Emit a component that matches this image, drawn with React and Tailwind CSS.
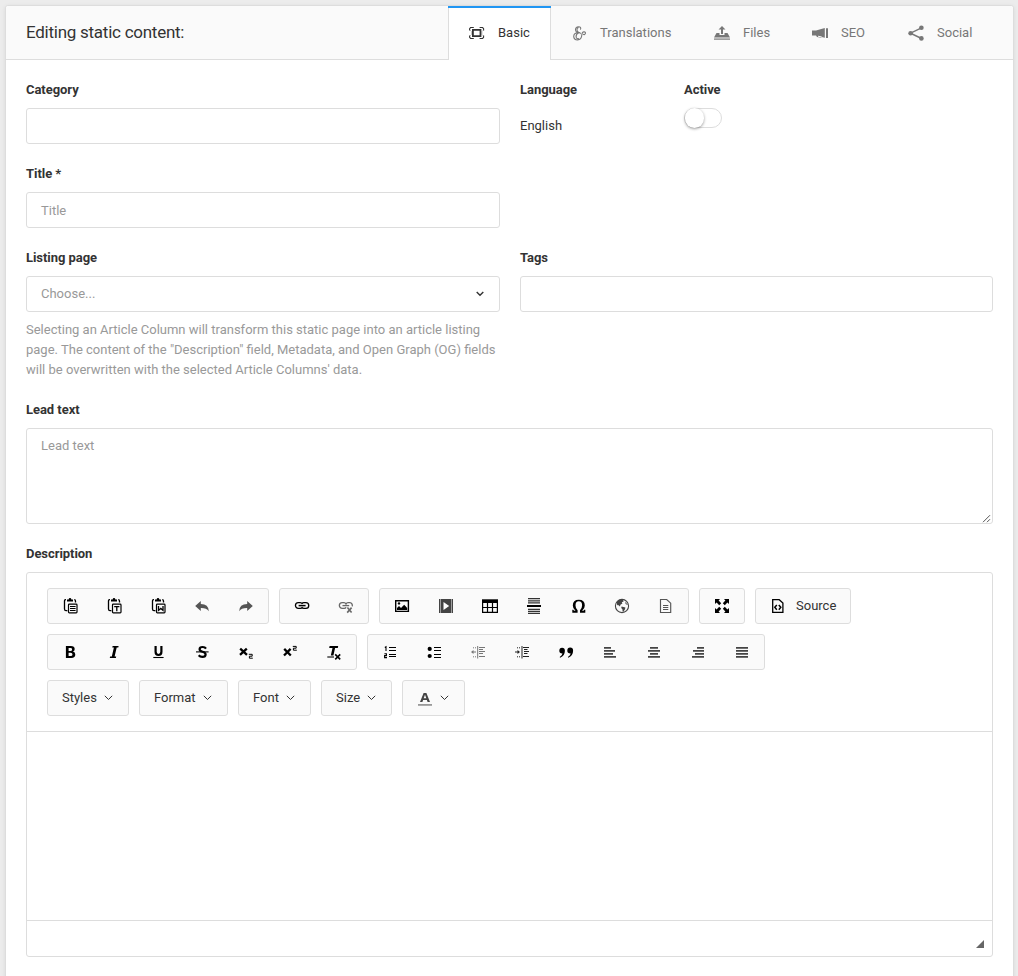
import React from "react";

const Svg = ({ children, className = "" }) => (
  <svg width="16" height="16" viewBox="0 0 16 16" fill="currentColor" className={"block shrink-0 " + className}>
    {children}
  </svg>
);

const line = { fill: "none", stroke: "currentColor" };

const Clip = () => (
  <g>
    <path d="M4 1.6H3.6Q2.5 1.6 2.5 3V11Q2.5 12.6 4 12.6H5.4M12.2 1.6Q13.5 1.6 13.5 3V4.6" {...line} strokeWidth="1.3" />
    <path d="M5 1.4H6.6Q6.8 0 8 0T9.4 1.4H11V3.4H5Z" />
    <rect x="6.5" y="6.1" width="8.5" height="8.8" rx=".8" {...line} strokeWidth="1.2" />
  </g>
);

const icons = {
  paste: <><Clip /><path d="M8 8.5h5.6M8 10.5h5.6M8 12.5h5.6" {...line} /></>,
  pasteText: <><Clip /><path d="M8.2 8.6h5.2M10.8 8.6V13.2" {...line} strokeWidth="1.3" /></>,
  pasteWord: <><Clip /><path d="M8.5 8V12.4L10.8 10.4L13 12.4V8" {...line} strokeWidth="1.3" /></>,
  undo: <path d="M1.2 8 6.8 3V6Q14.6 6 14.8 13.2Q12.4 9.8 6.8 10V13Z" fill="#555" />,
  redo: <path d="M14.8 8 9.2 3V6Q1.4 6 1.2 13.2Q3.6 9.8 9.2 10V13Z" fill="#555" />,
  link: <>
    <path d="M6.4 10.4H4.3A2.85 2.85 0 0 1 4.3 4.7H6.2Q7.7 4.7 8.4 6M9.8 4.7H11.9A2.85 2.85 0 0 1 11.9 10.4H10Q8.5 10.4 7.8 9.1M9.8 4.7Q8.6 4.8 8 5.6M6.4 10.4Q7.6 10.3 8.2 9.5" {...line} strokeWidth="1.3" />
    <path d="M4.6 7.6H11.6" {...line} strokeWidth="1.5" />
  </>,
  unlink: <g className="text-[#686868]">
    <path d="M6.2 10.4H4.2A2.85 2.85 0 0 1 4.2 4.7H6Q7.4 4.7 8 6Q8.6 4.7 10 4.7H11.9Q14.7 5 14.3 8.4M6.2 10.4Q7.6 10.3 8 9.2" {...line} strokeWidth="1.3" />
    <path d="M4.5 7.6H11.2" {...line} strokeWidth="1.3" />
    <path d="M9.4 9.6 13.6 14.6M13.6 9.6 9.2 14.6" {...line} strokeWidth="1.6" />
  </g>,
  image: <><path d="M1.7 2.7h12.7v10.7H1.7z" {...line} strokeWidth="1.4" /><path d="M3 12V10L5 8L7 10L10.2 6.8L13.2 10V12Z" /><circle cx="5" cy="5.4" r="1.2" /></>,
  video: <><path d="M1 1H15V15H1Z" fill="#444" /><path d="M2.5 1.5V15M13.5 1.5V15" fill="none" stroke="#fafafa" strokeDasharray="1 1" /><path d="M5.5 4V12L11.2 8Z" fill="#fff" /></>,
  table: <><path d="M0 1.3H16V5H0Z" /><path d="M.6 4V14.4H15.4V4M.5 9.5H15.5M5.5 5V14.5M10.5 5V14.5" {...line} strokeWidth="1.2" /></>,
  hr: <><path d="M2 .7H14M2 2.8H14M2 4.9H14M2 11.3H14M2 13.4H14M2 15.4H14" {...line} stroke="#333" strokeWidth="1.2" /><path d="M1 7h14v2H1z" /></>,
  omega: <path transform="translate(.8 .3)" d="M1.5 14.4V11.4H2.6Q2.8 12.4 3.8 12.4H4.7Q2 10.6 2 7.2Q2 1.5 8 1.5T14 7.2Q14 10.6 11.3 12.4H12.3Q13.2 12.4 13.4 11.4H14.5V14.4H9.2V11.9Q11.3 10 11.3 7.2Q11.3 3 8 3T4.7 7.2Q4.7 10 6.8 11.9V14.4Z" />,
  globe: <g className="text-[#444]"><circle cx="8" cy="8" r="6.6" {...line} strokeWidth="1.1" /><path d="M3 3.6Q6 1 8.8 1.6L9.6 3.4L7.8 4.2L8.4 5.6L6.4 6.8L6 8.4L3.8 6.8L3 7.6Z" /><path d="M7.6 8.4L11.4 9.4L11 11.2L9.4 13.8L8.6 13.5L8.4 11.2L7.2 10Z" /><path d="M11.6 3.6L14.2 7L12.4 6.8L11 5.2Z" fillOpacity=".65" /></g>,
  doc: <g className="text-[#555]" transform="translate(-.5 0)"><path d="M3 1.5H9.2L13.2 5.2V14.5H3Z" {...line} strokeWidth="1.15" /><path d="M5.5 7.5H10.8M5.5 9.5H10.8M5.5 11.5H10.8" {...line} /></g>,
  maximize: <path d="M1 1H6L4.6 2.6L7.2 5.2L5.2 7.2L2.6 4.6L1 6ZM15 1V6L13.4 4.6L10.8 7.2L8.8 5.2L11.4 2.6L10 1ZM1 15V10L2.6 11.4L5.2 8.8L7.2 10.8L4.6 13.4L6 15ZM15 15H10L11.4 13.4L8.8 10.8L10.8 8.8L13.4 11.4L15 10Z" />,
  source: <><path d="M3.7 1.7H10.2L13.9 5V14.4H3.7Z" {...line} strokeWidth="1.3" /><path d="M7.8 6.9 5.8 9.3 7.8 11.7M9.8 6.9 11.8 9.3 9.8 11.7" {...line} strokeWidth="1.5" /></>,
  bold: <path transform="translate(.5 0)" fillRule="evenodd" d="M3.4 2H8.4Q12.2 2 12.2 5Q12.2 7.1 10.5 7.6Q12.8 8.2 12.8 10.6Q12.8 14 8.8 14H3.4ZM6.1 4V6.9H7.9Q9.6 6.9 9.6 5.4T7.9 4ZM6.1 8.8V12H8.1Q10 12 10 10.4T8.1 8.8Z" />,
  italic: <path d="M6.6 2H12.6L12.3 3.6H10.7L8.6 12.4H10.2L9.9 14H3.8L4.1 12.4H5.8L7.9 3.6H6.3Z" />,
  underline: <><path d="M5.6 2V7.8Q5.6 11 8.5 11T11.4 7.8V2" {...line} strokeWidth="2.2" /><path d="M3.3 13.5H13.6" {...line} strokeWidth="1.1" /></>,
  strike: <g transform="translate(.4 0)"><path d="M11.6 4.6Q10.6 3 8.2 3Q5.2 3 5.2 5.2Q5.2 7 8.2 7.7Q11.2 8.5 11.2 10.5Q11.2 12.9 8 12.9Q5.6 12.9 4.3 11.3" {...line} strokeWidth="2.2" /><path d="M1.6 7.9H14.2" {...line} strokeWidth="1.1" /></g>,
  sub: <><path d="M2.2 4.6 9 10.8M8.8 4.6 2 10.8" {...line} strokeWidth="2.3" /><path d="M10.8 10.3H14.2V12.2H11.4V14.2H14.8" {...line} strokeWidth="1" /></>,
  sup: <><path d="M2.2 4.9 8.8 11.5M8.6 4.9 2 11.5" {...line} strokeWidth="2.3" /><path d="M10.8 2.4H14.2V4.2H11.4V6.2H14.8" {...line} strokeWidth="1" /></>,
  clear: <><path d="M3.6 2H12.2L11.8 4H9.1L7.4 11.4H4.8L6.5 4H3.2Z" /><path d="M1.3 13H8" {...line} strokeWidth="1.1" /><path d="M9.2 10.4 14.2 15.4M14.2 10.4 9.2 15.4" {...line} strokeWidth="1.6" /></>,
  numbered: <><path d="M2.8 3.4 4 2.7V7M2.4 9.8H4.4V11.6H2.6V13.6H5" {...line} strokeWidth="1.1" /><path d="M7 3.5H14M7 6.5H14M7 10.5H14M7 12.5H14" {...line} strokeWidth="1.1" /></>,
  bullets: <><circle cx="3.7" cy="4.9" r="2.1" /><circle cx="3.7" cy="12" r="2.1" /><path d="M8 3.5H15M8 6.5H15M8 10.5H15M8 13.5H15" {...line} strokeWidth="1.1" /></>,
  outdent: <g className="text-[#777]"><path d="M7.7 2V14.5M9 3.5H15M9 5.5H13M9 7.5H15M9 9.5H13M9 12.5H15" {...line} /><path d="M3 3.8H7M3 12.8H7" {...line} strokeDasharray="1 1" /><path d="M2 8H6" {...line} /><path d="M1 8 3.5 6V10Z" /></g>,
  indent: <g className="text-[#222]"><path d="M8 2V14.5M9 3.5H15M10 5.5H13.5M10 7.5H15M10 9.5H13.5M9 12.5H15" {...line} /><path d="M3 3.8H7M3 12.8H7" {...line} strokeDasharray="1 1" /><path d="M1 8H5" {...line} /><path d="M6 8 3.5 6V10Z" /></g>,
  quote: <path transform="translate(.3 .2) scale(1 1.1)" d="M1 6A2.8 2.8 0 1 1 6.6 6Q6.6 10.4 1.8 12.4L1.4 11.6Q4 10.2 4.2 8.5Q1 8.6 1 6ZM9 6A2.8 2.8 0 1 1 14.8 6Q14.8 10.4 10 12.4L9.6 11.6Q12.2 10.2 12.4 8.5Q9 8.6 9 6Z" />,
  left: <path d="M2 3h7v1.7H2zm0 3h11v1.7H2zm0 3h9v1.7H2zm0 3h12v1.7H2z" fill="#444" />,
  center: <path d="M4 3h8v1.7H4zM2 6h12v1.7H2zm2 3h8v1.7H4zm-2 3h12v1.7H2z" fill="#444" />,
  right: <path d="M7 3h7v1.7H7zM3 6h11v1.7H3zm2 3h9v1.7H5zm-3 3h12v1.7H2z" fill="#444" />,
  justify: <path d="M2 3h12v1.8H2zm0 3h12v1.8H2zm0 3h12v1.8H2zm0 3h12v1.8H2z" fill="#444" />,
  basic: <><path d="M3.9 4.9H11.5V11.1H3.9Z" {...line} strokeWidth="1.8" /><path d="M.6 5.5V3.8L1.6 2.5H4.8M10.6 2.5H13.6L14.6 3.8V5.5M.6 10.5V12.2L1.6 13.5H4.8M10.6 13.5H13.6L14.6 12.2V10.5" {...line} strokeWidth="1.1" /><path d="M1 5 2.5 6.5V9.5L1 11M14.4 5 13 6.5V9.5L14.4 11" {...line} strokeOpacity=".35" strokeWidth=".8" /></>,
  amp: <path d="M9.4 4.6Q10.6 1.8 7.6 1.7Q4.4 1.8 4.5 4.8Q4.8 7.6 8.4 7.5Q2.6 7.6 2.7 11.4Q2.9 15 6.5 15Q10.6 14.7 10.8 10Q11 7.1 13 6.8Q14.9 7 14.3 8.8Q13.3 10.2 12.1 9.2M8.2 7.5Q9.6 7.7 9.2 9M7.6 8Q4.8 9 5.1 12Q5.6 14.2 8 13.6M7.4 2.4Q5.6 3.2 6 5Q6.2 6.6 7.6 7.2" {...line} strokeWidth="1.1" />,
  files: <><path d="M8 1 4.5 4.5H7V9H9V4.5H11.5Z" /><path d="M2.5 8H5.5V10H10.5V8H13.5L16 12.5H0Z" /><path d="M0 13.5h16v1.2H0z" /></>,
  megaphone: <><path d="M0 5.5H4L12.8 3V12.8L9.5 12V12.7L5 12L4 10.6H0Z" /><path d="M14 3.2h2V13h-2z" /><path d="M6 11.2 9.8 12" stroke="#fafafa" /></>,
  share: <><path d="M13.5 2.8 2.5 8.2 13.5 13.5" {...line} strokeWidth="1.5" /><circle cx="13.4" cy="2.8" r="2.3" /><circle cx="2.6" cy="8.2" r="2.3" /><circle cx="13.4" cy="13.4" r="2.3" /></>,
};

const Group = ({ names }) => (
  <div className="flex h-9 rounded-[3px] border border-[#ddd] bg-[#fafafa]">
    {names.map((n) => (
      <button key={n} className="flex h-[34px] w-11 items-center justify-center text-black">
        <Svg>{icons[n]}</Svg>
      </button>
    ))}
  </div>
);

const Combo = ({ label, width }) => (
  <button className={"flex h-9 items-center justify-between rounded-[3px] border border-[#ddd] bg-[#fafafa] pr-[15px] pl-[14px] " + width}>
    {label}
    <svg width="9" height="6" viewBox="0 0 9 6"><path d="M.8 .8 4.5 4.5 8.2 .8" fill="none" stroke="#333" /></svg>
  </button>
);

const Tab = ({ icon, label, active, width }) => (
  <button
    className={
      "flex items-center gap-[13px] " + width + " " +
      (active
        ? "relative -mb-px h-[54px] border-x border-[#ddd] bg-white pl-5 text-[#333] before:absolute before:-inset-x-px before:top-0 before:h-[2px] before:bg-[#2196f3]"
        : "h-[53px] text-[#777]")
    }
  >
    <Svg>{icons[icon]}</Svg>
    {label}
  </button>
);

const Label = ({ children }) => <div className="mb-2 font-bold tracking-[-0.05px]">{children}</div>;
const box = "rounded-[3px] border border-[#ddd] bg-white";

export default function App() {
  return (
    <div className="h-[976px] overflow-hidden bg-[#ececec] pt-[5px] pl-[5px] font-['Roboto',sans-serif] text-[13px] leading-5 text-[#333]">
      <div className="h-[1000px] w-[1009px] rounded-[3px] border border-[#ddd] bg-white shadow-[0_1px_4px_rgba(0,0,0,0.08)]">
        <div className="flex h-[54px] rounded-t-[3px] border-b border-[#ddd] bg-[#fafafa]">
          <h1 className="w-[442px] pt-4 pl-5 text-[17px] tracking-[-0.015em]">Editing static content:</h1>
          <Tab icon="basic" label="Basic" active width="w-[103px]" />
          <Tab icon="amp" label="Translations" width="w-[142px] pl-5" />
          <Tab icon="files" label="Files" width="w-[98px] pl-[21px]" />
          <Tab icon="megaphone" label="SEO" width="w-[96px] pl-[21px]" />
          <Tab icon="share" label="Social" width="w-[105px] pl-[21px]" />
        </div>
        <div className="px-5 pt-5">
          <div className="grid grid-cols-[474px_473px] gap-x-5">
            <div>
              <Label>Category</Label>
              <div className={"h-9 " + box} />
            </div>
            <div className="flex">
              <div className="w-[164px]">
                <Label>Language</Label>
                <div className="pt-2">English</div>
              </div>
              <div>
                <Label>Active</Label>
                <div className="h-5 w-[38px] rounded-full border border-[#ddd] bg-white">
                  <div className="-mt-px h-5 w-[19px] rounded-full bg-white shadow-[0_1px_3px_rgba(0,0,0,0.4)]" />
                </div>
              </div>
            </div>
            <div className="mt-5">
              <Label>Title *</Label>
              <div className={"flex h-9 items-center px-[14px] pt-[2px] text-[#999] " + box}>Title</div>
            </div>
            <div />
            <div className="mt-5">
              <Label>Listing page</Label>
              <div className={"flex h-9 items-center justify-between pr-[15px] pl-[14px] text-[#999] " + box}>
                Choose...
                <svg width="8" height="6" viewBox="0 0 8 6"><path d="M.7 1 4 4.3 7.3 1" fill="none" stroke="#333" strokeWidth="1.4" /></svg>
              </div>
              <p className="mt-2 whitespace-nowrap text-[#999]">
                Selecting an Article Column will transform this static page into an article listing<br />
                page. The content of the "Description" field, Metadata, and Open Graph (OG) fields<br />
                will be overwritten with the selected Article Columns' data.
              </p>
            </div>
            <div className="mt-5">
              <Label>Tags</Label>
              <div className={"h-9 " + box} />
            </div>
          </div>
          <div className="mt-5">
            <Label>Lead text</Label>
            <div className={"flex h-24 items-end justify-between pl-[14px] text-[#999] " + box}>
              <span className="self-start pt-[7px]">Lead text</span>
              <svg width="9" height="9" viewBox="0 0 9 9" className="mr-px"><path d="M1 8.2 8 1.2M5 8.2 8 5.2" fill="none" stroke="#555" /></svg>
            </div>
          </div>
          <div className="mt-5">
            <Label>Description</Label>
            <div className={"h-[385px] " + box}>
              <div className="flex h-[159px] flex-col gap-[10px] border-b border-[#ddd] pt-[15px] pl-5">
                <div className="flex gap-[10px]">
                  <Group names={["paste", "pasteText", "pasteWord", "undo", "redo"]} />
                  <Group names={["link", "unlink"]} />
                  <Group names={["image", "video", "table", "hr", "omega", "globe", "doc"]} />
                  <Group names={["maximize"]} />
                  <button className="flex h-9 w-24 items-center gap-[11px] rounded-[3px] border border-[#ddd] bg-[#fafafa] pl-[13px]">
                    <Svg className="text-black">{icons.source}</Svg>
                    Source
                  </button>
                </div>
                <div className="flex gap-[10px]">
                  <Group names={["bold", "italic", "underline", "strike", "sub", "sup", "clear"]} />
                  <Group names={["numbered", "bullets", "outdent", "indent", "quote", "left", "center", "right", "justify"]} />
                </div>
                <div className="flex gap-[10px]">
                  <Combo label="Styles" width="w-[82px]" />
                  <Combo label="Format" width="w-[89px]" />
                  <Combo label="Font" width="w-[73px]" />
                  <Combo label="Size" width="w-[71px]" />
                  <Combo
                    width="w-[63px]"
                    label={<Svg className="mt-px text-[#444]"><path fillRule="evenodd" d="M3 11 6.6 2H9.4L13 11H10.6L9.9 9H6.1L5.4 11ZM6.7 7.3H9.3L8 3.8Z" /><path d="M1 13h14v1.8H1z" fill="#999" /></Svg>}
                  />
                </div>
              </div>
              <div className="h-[189px] border-b border-[#ddd]" />
              <div className="flex h-[35px] items-end justify-end pr-2 pb-2">
                <svg width="8" height="8" viewBox="0 0 8 8"><path d="M8 0V8H0Z" fill="#666" /></svg>
              </div>
            </div>
          </div>
        </div>
      </div>
    </div>
  );
}
